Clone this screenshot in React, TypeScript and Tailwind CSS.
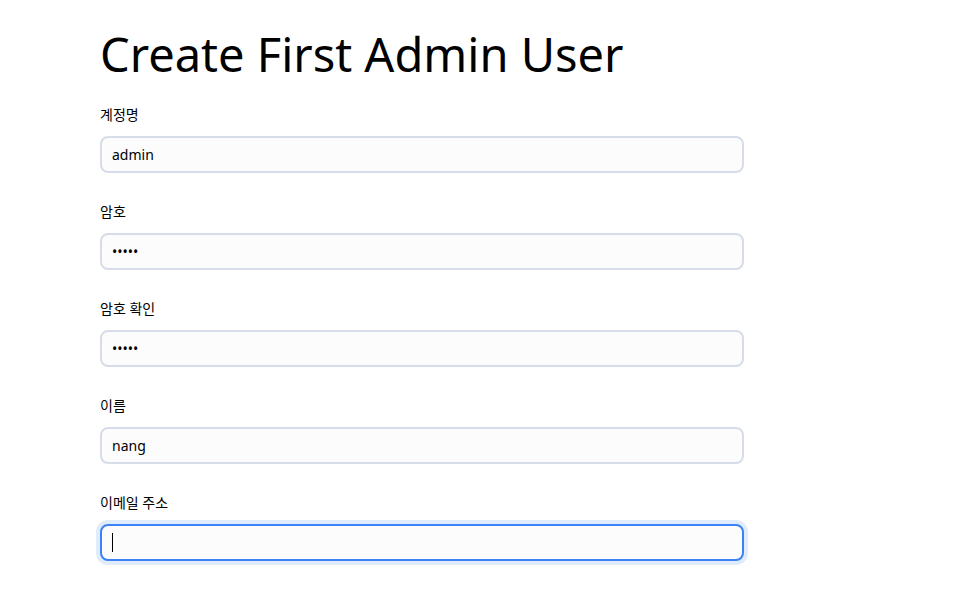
import React from "react";

const fields = [
  { label: "계정명", type: "text", value: "admin" },
  { label: "암호", type: "password", value: "admin" },
  { label: "암호 확인", type: "password", value: "admin" },
  { label: "이름", type: "text", value: "nang" },
  { label: "이메일 주소", type: "email", value: "", focus: true },
];

export default function App() {
  return (
    <div
      className="min-h-screen bg-white text-black pl-[100px] pt-[24px]"
      style={{ fontFamily: '"Noto Sans", "Noto Sans CJK KR", sans-serif' }}
    >
      <h1 className="text-[47px] leading-[60px] font-normal mb-[20px]">Create First Admin User</h1>
      <div className="flex flex-col gap-[28px] w-[644px]">
        {fields.map((f) => (
          <div key={f.label} className="flex flex-col gap-[10px]">
            <label className="text-[14px] leading-[22px]">{f.label}</label>
            <div className="relative">
              <input
                type={f.type}
                defaultValue={f.value}
                className={
                  f.focus
                    ? "w-full h-[37px] rounded-[8px] border-2 border-[#3b82f6] bg-[#fcfcfd] px-[10px] text-[14px] outline-none ring-4 ring-[#e0ebfb]"
                    : "w-full h-[37px] rounded-[8px] border-2 border-[#d6dde8] bg-[#fcfcfd] px-[10px] text-[14px] outline-none"
                }
              />
              {f.focus && (
                <span className="absolute left-[12px] top-[9px] w-px h-[19px] bg-black" />
              )}
            </div>
          </div>
        ))}
      </div>
    </div>
  );
}
